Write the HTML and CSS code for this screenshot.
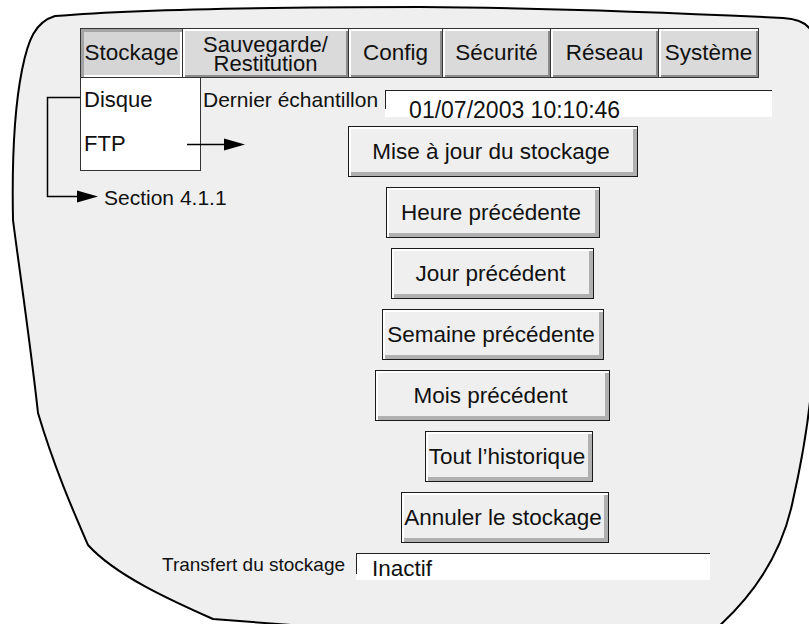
FILE: index.html
```html
<!DOCTYPE html>
<html lang="fr">
<head>
    <meta charset="UTF-8">
    <meta name="viewport" content="width=device-width, initial-scale=1.0">
    <title>Stockage</title>
    <link rel="stylesheet" href="styles.css">
</head>
<body>
    <div class="screen">
        <!-- hand drawn outline of the recorder screen -->
        <svg class="outline" width="809" height="624" viewBox="0 0 809 624">
            <path d="M13 220 C12 170 14 110 22 70 C28 40 35 22 55 16 C150 8 300 7 420 7 C560 8 700 14 783 18 C800 19 808 24 812 32 L812 380 C809 420 802 460 793 500 C785 540 765 585 717 628 L330 628 L213 619 C170 600 115 575 88 545 C75 515 55 470 38 413 C30 340 18 260 13 220 Z"/>
        </svg>

        <div class="panel">
            <div class="tabs">
                <div class="tab tab-storage active">Stockage</div>
                <div class="tab tab-backup"><span>Sauvegarde/</span><span>Restitution</span></div>
                <div class="tab tab-config">Config</div>
                <div class="tab tab-security">Sécurité</div>
                <div class="tab tab-network">Réseau</div>
                <div class="tab tab-system">Système</div>
            </div>

            <div class="field-row sample-row">
                <span class="field-label">Dernier échantillon</span>
                <div class="field sample-field">01/07/2003 10:10:46</div>
            </div>

            <div class="actions">
                <button class="btn btn-update">Mise à jour du stockage</button>
                <button class="btn btn-hour">Heure précédente</button>
                <button class="btn btn-day">Jour précédent</button>
                <button class="btn btn-week">Semaine précédente</button>
                <button class="btn btn-month">Mois précédent</button>
                <button class="btn btn-all">Tout l’historique</button>
                <button class="btn btn-cancel">Annuler le stockage</button>
            </div>

            <div class="field-row transfer-row">
                <span class="field-label">Transfert du stockage</span>
                <div class="field transfer-field">Inactif</div>
            </div>
        </div>

        <ul class="dropdown">
            <li>Disque</li>
            <li>FTP</li>
        </ul>

        <svg class="callouts" width="260" height="215" viewBox="0 0 260 215">
            <path d="M80 97.5 H47.5 V196.5 H84"/>
            <polygon points="77,190.5 98,196.5 77,202.5"/>
            <path d="M187 144.5 H226"/>
            <polygon points="224,138.5 245,144.5 224,150.5"/>
        </svg>
        <span class="callout-text">Section 4.1.1</span>
    </div>
</body>
</html>
```

FILE: styles.css
```css
* {
    box-sizing: border-box;
}

body {
    margin: 0;
    background: #fff;
    font-family: "Liberation Sans", Arial, Helvetica, sans-serif;
    color: #111;
}

.screen {
    position: relative;
    width: 809px;
    height: 624px;
    overflow: hidden;
}

.outline {
    position: absolute;
    left: 0;
    top: 0;
}
.outline path {
    fill: #efefef;
    stroke: #000;
    stroke-width: 2;
}

.panel {
    position: relative;
    padding: 28px 0 0 80px;
}

/* tab bar */
.tabs {
    display: flex;
    height: 50px;
}
.tab {
    display: flex;
    flex-direction: column;
    align-items: center;
    justify-content: center;
    text-align: center;
    background: #dadada;
    border: 1px solid #333;
    border-left: none;
    font-size: 22.5px;
    line-height: 20px;
    box-shadow: inset 2px 2px 0 #fff, inset -2px -2px 0 #8c8c8c;
}
.tab:first-child {
    border-left: 1px solid #333;
}
.tab.active {
    background: #d5d5d5;
    box-shadow: inset 3px 3px 0 #a4a4a4, inset -2px -2px 0 #fff;
}
.tab-backup {
    font-size: 22px;
    line-height: 19px;
    padding-top: 1px;
}
.tab-backup span {
    display: block;
    height: 19px;
}
.tab-storage { width: 103px; }
.tab-backup { width: 166px; }
.tab-config { width: 94px; }
.tab-security { width: 108px; }
.tab-network { width: 108px; }
.tab-system { width: 100px; }

/* read only fields */
.field-row {
    display: flex;
    align-items: flex-start;
}
.field-label {
    white-space: nowrap;
}
.field {
    --tick: 18px;
    background: linear-gradient(#222, #222) no-repeat 0 0 / 1px var(--tick), #fff;
    border-top: 1px solid #222;
    height: 27px;
    white-space: nowrap;
}

.sample-row {
    margin: 12px 0 0 123px;
}
.sample-row .field-label {
    font-size: 21px;
    line-height: 24px;
    margin: -2px 7px 0 0;
}
.sample-field {
    width: 387px;
    padding: 6px 0 0 24px;
    font-size: 23px;
    line-height: 26px;
}

.transfer-row {
    margin: 10px 0 0 82px;
}
.transfer-row .field-label {
    font-size: 19px;
    line-height: 22px;
    margin: 1px 11px 0 0;
}
.transfer-field {
    --tick: 20px;
    width: 354px;
    padding: 2px 0 0 16px;
    font-size: 22.5px;
    line-height: 26px;
}

/* action buttons */
.actions {
    display: flex;
    flex-direction: column;
    align-items: flex-start;
    gap: 10px;
    margin-top: 9px;
}
.btn {
    height: 51px;
    padding: 0 4px 0 0;
    font-family: inherit;
    font-size: 22.5px;
    color: #111;
    background: #efefef;
    border: 1px solid #1a1a1a;
    border-radius: 0;
    box-shadow: inset 2px 2px 0 #fff, inset -4px -4px 0 #b0b0b0;
    white-space: nowrap;
    cursor: pointer;
}
.btn-update { margin-left: 268px; width: 290px; }
.btn-hour { margin-left: 306px; width: 214px; }
.btn-day { margin-left: 311px; width: 203px; }
.btn-week { margin-left: 302px; width: 222px; }
.btn-month { margin-left: 295px; width: 235px; }
.btn-all { margin-left: 345px; width: 168px; }
.btn-cancel { margin-left: 321px; width: 208px; }

/* open sub menu of the storage tab */
.dropdown {
    position: absolute;
    left: 80px;
    top: 78px;
    width: 121px;
    height: 93px;
    margin: 0;
    padding: 0 0 0 3px;
    list-style: none;
    background: #fff;
    border: 1px solid #333;
    border-top: none;
    font-size: 22px;
    line-height: 44px;
}

.callouts {
    position: absolute;
    left: 0;
    top: 0;
}
.callouts path {
    fill: none;
    stroke: #000;
    stroke-width: 1.5;
}
.callouts polygon {
    fill: #000;
}
.callout-text {
    position: absolute;
    left: 104px;
    top: 186px;
    font-size: 21px;
    line-height: 24px;
}
```
